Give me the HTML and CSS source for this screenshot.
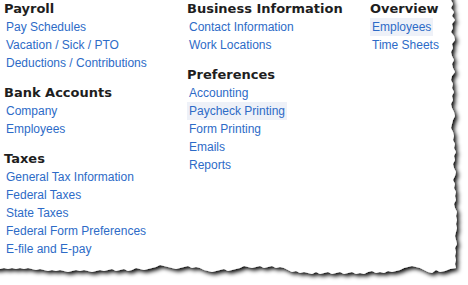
FILE: index.html
```html
<!DOCTYPE html>
<html>
<head>
<meta charset="utf-8">
<link rel="stylesheet" href="styles.css">
</head>
<body>
<svg class="paper" width="468" height="285" viewBox="0 0 468 285" aria-hidden="true">
  <defs>
    <filter id="sh" x="-10%" y="-10%" width="130%" height="130%">
      <feDropShadow dx="2.5" dy="2.5" stdDeviation="2" flood-color="#000" flood-opacity="1"/>
    </filter>
  </defs>
  <path filter="url(#sh)" fill="#fff" d="M-10,-10 L451,-10 L451,0 L453,4 L451,8 L454,12 L452,16 L455,20 L452,24 L453,28 L451,32 L454,36 L455,40 L452,44 L453,48 L451,52 L452,56 L454,60 L452,64 L453,68 L455,72 L452,76 L451,80 L453,84 L452,88 L454,92 L452,96 L453,100 L451,104 L452,108 L454,112 L455,116 L453,120 L452,124 L451,128 L453,132 L454,136 L453,140 L455,144 L454,148 L456,152 L454,156 L455,160 L453,164 L454,168 L456,172 L455,176 L453,180 L455,184 L454,188 L456,192 L455,196 L456,200 L454,204 L455,208 L457,212 L456,216 L457,220 L456,224 L457,228 L456,232 L455,236 L456,240 L457,244 L455,248 L456,252 L455,256 L456,260 L455,264 L456,268 L450,269 L445,271 L440,272 L436,270 L432,273 L428,272 L424,270 L420,268 L416,267 L412,266 L408,267 L404,268 L400,270 L396,271 L392,272 L388,271 L384,273 L380,272 L376,273 L372,271 L368,272 L364,274 L360,273 L356,274 L352,272 L348,273 L344,274 L340,272 L336,273 L332,274 L328,272 L324,273 L320,274 L316,272 L312,274 L308,273 L304,272 L300,273 L296,271 L292,272 L288,270 L284,268 L280,267 L276,268 L272,266 L268,267 L264,268 L260,266 L256,267 L252,268 L248,267 L244,266 L240,268 L236,269 L232,270 L228,271 L224,269 L220,270 L216,271 L212,272 L208,271 L204,270 L200,268 L196,267 L192,268 L188,266 L184,267 L180,268 L176,269 L172,268 L168,267 L164,266 L160,265 L156,267 L152,268 L148,269 L144,270 L140,269 L136,268 L132,270 L128,271 L124,269 L120,270 L116,271 L112,269 L108,270 L104,271 L100,270 L96,271 L92,272 L88,271 L84,270 L80,271 L76,270 L72,271 L68,272 L64,271 L60,270 L56,271 L52,270 L48,271 L44,270 L40,269 L36,270 L32,269 L28,268 L24,269 L20,268 L16,269 L12,268 L8,269 L4,268 L0,269 L-10,269 Z"/>
</svg>
<div class="menu">
  <div class="col">
    <div class="group">
      <div class="head">Payroll</div>
      <a class="link">Pay Schedules</a>
      <a class="link">Vacation / Sick / PTO</a>
      <a class="link">Deductions / Contributions</a>
    </div>
    <div class="group">
      <div class="head">Bank Accounts</div>
      <a class="link">Company</a>
      <a class="link">Employees</a>
    </div>
    <div class="group">
      <div class="head">Taxes</div>
      <a class="link">General Tax Information</a>
      <a class="link">Federal Taxes</a>
      <a class="link">State Taxes</a>
      <a class="link">Federal Form Preferences</a>
      <a class="link">E-file and E-pay</a>
    </div>
  </div>
  <div class="col">
    <div class="group">
      <div class="head">Business Information</div>
      <a class="link">Contact Information</a>
      <a class="link">Work Locations</a>
    </div>
    <div class="group">
      <div class="head">Preferences</div>
      <a class="link">Accounting</a>
      <a class="link hl">Paycheck Printing</a>
      <a class="link">Form Printing</a>
      <a class="link">Emails</a>
      <a class="link">Reports</a>
    </div>
  </div>
  <div class="col">
    <div class="group">
      <div class="head">Overview</div>
      <a class="link hl">Employees</a>
      <a class="link">Time Sheets</a>
    </div>
  </div>
</div>
</body>
</html>
```
FILE: styles.css
```css
html, body {
  margin: 0;
  padding: 0;
  background: #fff;
}
body {
  width: 468px;
  height: 285px;
  position: relative;
  overflow: hidden;
}
.paper {
  position: absolute;
  left: 0;
  top: 0;
  z-index: 0;
}
.menu {
  position: relative;
  z-index: 1;
  display: grid;
  grid-template-columns: 183px 183px auto;
  padding: 0 0 0 4px;
}
.col {
  display: flex;
  flex-direction: column;
  gap: 12px;
}
.group {
  display: flex;
  flex-direction: column;
  align-items: flex-start;
}
.head {
  font-family: "DejaVu Sans", Verdana, sans-serif;
  font-weight: bold;
  font-size: 13px;
  line-height: 18px;
  color: #1e1e1e;
}
.link {
  font-family: "Liberation Sans", Arial, sans-serif;
  font-size: 12px;
  line-height: 16px;
  padding: 1px 2px;
  color: #2d6bc7;
}
.hl {
  background: #eef1f8;
}
```
